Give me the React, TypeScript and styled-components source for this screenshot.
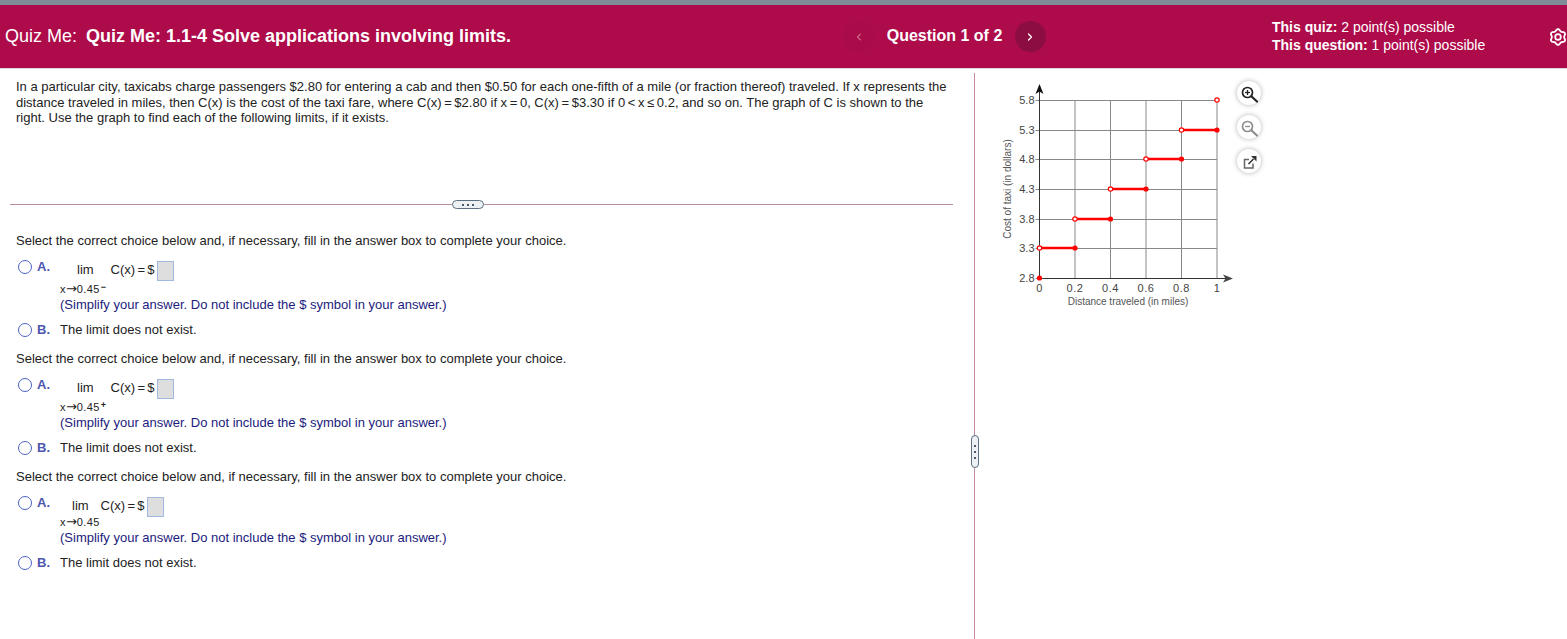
import React from "react";
import styled, {createGlobalStyle} from "styled-components";
import {ChevronLeft, ChevronRight} from "lucide-react";

const GlobalStyle = createGlobalStyle`
  html, body {
    margin: 0;
    padding: 0;
    background: #fff;
    overflow: hidden;
  }
  body {
    font-family: "Liberation Sans", Arial, sans-serif;
    color: #222;
  }
`

const Page = styled.div`
  width: 1567px;
  height: 639px;
  display: flex;
  flex-direction: column;
`

const Header = styled.header`
  height: 63px;
  flex: none;
  display: grid;
  grid-template-columns: 843px 203px 226px 1fr;
  align-items: center;
  background: #ae0b4a;
  border-top: 5px solid #7f8c98;
  border-bottom: 1px solid #d9d9de;
  color: #fff;
`

const Title = styled.div`
  padding-left: 5px;
  font-size: 18px;
  white-space: nowrap;

  b {
    margin-left: 4px;
  }
`

const Pager = styled.div`
  display: flex;
  align-items: center;
  justify-content: space-between;
  font-size: 16px;
  font-weight: bold;
`

const PagerLabel = styled.span`
  margin-top: -2px;
`

const PageButton = styled.div<{$active?: boolean}>`
  width: 31px;
  height: 31px;
  border-radius: 50%;
  display: flex;
  align-items: center;
  justify-content: center;
  background: ${p => p.$active ? "#8c0e40" : "#a90c49"};
  color: ${p => p.$active ? "#fff" : "#e3a9bf"};
`

const Points = styled.div`
  grid-column: 4;
  display: flex;
  justify-content: space-between;
  align-items: center;
  font-size: 14px;
  line-height: 18px;
`

const PointsText = styled.div`
  margin-top: -2px;
`

const Body = styled.main`
  flex: 1;
  display: flex;
  min-height: 0;
`

const LeftPane = styled.section`
  width: 970px;
  flex: none;
  padding-top: 10px;
  box-sizing: border-box;
`

const Prompt = styled.p`
  margin: 0 0 0 16px;
  width: 935px;
  height: 121px;
  font-size: 13px;
  line-height: 15.5px;
`

const Rule = styled.div`
  margin-left: 10px;
  width: 943px;
  display: grid;
  grid-template-columns: 442px 32px 1fr;
  align-items: center;
  height: 9px;
`

const RuleLine = styled.div`
  height: 1px;
  background: #b98c9d;
`

const RulePill = styled.div`
  height: 9px;
  box-sizing: border-box;
  border: 1px solid #5d6f80;
  border-radius: 5px;
  background: #eef1f4;
  display: flex;
  align-items: center;
  justify-content: center;
  gap: 3px;
`

const Dot = styled.i`
  width: 2px;
  height: 2px;
  background: #4a5a6a;
  display: block;
`

const Part = styled.div<{$top: number}>`
  margin: ${p => p.$top}px 0 0 16px;
  font-size: 13px;
`

const Instruction = styled.div`
  height: 16px;
  line-height: 16px;
`

const ChoiceRow = styled.div<{$top: number}>`
  display: grid;
  grid-template-columns: 14px 24px 1fr;
  column-gap: 2px;
  margin: ${p => p.$top}px 0 0 2px;
`

const Radio = styled.span`
  width: 14px;
  height: 14px;
  margin-top: 1px;
  box-sizing: border-box;
  border: 1.5px solid #4a62c4;
  border-radius: 50%;
  background: #fff;
`

const Letter = styled.span`
  font-weight: bold;
  color: #4c57ad;
  line-height: 16px;
  padding-left: 3px;
`

const ChoiceText = styled.div`
  line-height: 16px;
`

const LimitLine = styled.div<{$pad: number; $gap: number}>`
  display: flex;
  align-items: center;
  height: 20px;
  margin-top: 1px;
  padding-left: ${p => p.$pad}px;

  > span:first-child {
    margin-right: ${p => p.$gap}px;
  }
`

const Equation = styled.span`
  word-spacing: -1.3px;
`

const AnswerBox = styled.span`
  width: 17px;
  height: 20px;
  margin: 2px 0 0 2px;
  box-sizing: border-box;
  border: 1px solid #a3b8e0;
  background: #dedede;
`

const Approach = styled.div<{$top: number}>`
  margin-top: ${p => p.$top}px;
  height: 14px;
  line-height: 14px;
  font-size: 11px;
  letter-spacing: 0.4px;

  sup {
    font-size: 9px;
    font-weight: bold;
    line-height: 0;
    vertical-align: 3px;
    margin-left: 1px;
  }
`

const Arrow = styled.span`
  font-family: "DejaVu Sans", sans-serif;
  font-size: 13px;
  line-height: 0;
  letter-spacing: 0;
`

const Hint = styled.div`
  margin-top: 1px;
  height: 16px;
  line-height: 16px;
  color: #1b1b7d;
`

const Grip = styled.div`
  width: 9px;
  flex: none;
  margin-top: 4px;
  display: grid;
  grid-template-rows: 362px 33px 1fr;
  justify-items: center;
`

const GripLine = styled.div`
  width: 1px;
  background: #c48aa0;
`

const GripPill = styled.div`
  width: 8px;
  box-sizing: border-box;
  border: 1px solid #5d6f80;
  border-radius: 4px;
  background: #eef1f4;
  display: flex;
  flex-direction: column;
  align-items: center;
  justify-content: center;
  gap: 4px;
`

const RightPane = styled.aside`
  flex: 1;
  display: flex;
  align-items: flex-start;
  padding: 11px 0 0 21px;
`

const Tools = styled.div`
  display: flex;
  flex-direction: column;
  gap: 10px;
  margin: 1px 0 0 1px;
`

const ToolButton = styled.div`
  width: 24px;
  height: 24px;
  border-radius: 50%;
  background: #fff;
  box-shadow: 0 0 5px rgba(0, 0, 0, 0.3);
  display: flex;
`

// six soft lobes, the stock gear icon comes out too spiky at this size
function gearPath() {
  const pts: string[] = []
  for (let i = 0; i < 72; i++) {
    const a = (i / 72) * Math.PI * 2
    const r = 7 + 0.9 * Math.cos(6 * a)
    pts.push(`${(9 + r * Math.sin(a)).toFixed(2)} ${(9 - r * Math.cos(a)).toFixed(2)}`)
  }
  return `M${pts.join("L")}Z`
}

function GearIcon() {
  return (
    <svg width="18" height="18" viewBox="0 0 18 18" fill="none" stroke="#fff" strokeWidth="1.8">
      <path d={gearPath()} strokeLinejoin="round" />
      <circle cx="9" cy="9" r="2.8" />
    </svg>
  )
}

function MagnifierIcon({color, plus}: {color: string; plus?: boolean}) {
  return (
    <svg width="24" height="24" viewBox="0 0 24 24" fill="none" stroke={color}>
      <circle cx="10.5" cy="11.5" r="5" strokeWidth="1.7" />
      <path d="M14.3 15.3 L20 20.5" strokeWidth="2.2" strokeLinecap="round" />
      <path d="M8 11.5 H13" strokeWidth="1.3" />
      {plus && <path d="M10.5 9 V14" strokeWidth="1.3" />}
    </svg>
  )
}

function PopoutIcon() {
  return (
    <svg width="24" height="24" viewBox="0 0 24 24" fill="none">
      <path d="M12 10.5 H7.5 V19 H16 V14.5" stroke="#666" strokeWidth="1.5" />
      <path d="M11.5 15 L16.5 10" stroke="#333" strokeWidth="1.6" />
      <path d="M14 7 H19.5 V12.5 Z" fill="#333" />
    </svg>
  )
}

const x0 = 39.5, xStep = 35.5
const yTicks = [
  {label: "5.8", y: 20},
  {label: "5.3", y: 50},
  {label: "4.8", y: 79},
  {label: "4.3", y: 109},
  {label: "3.8", y: 139},
  {label: "3.3", y: 168},
  {label: "2.8", y: 198},
]
const xLabels = ["0", "0.2", "0.4", "0.6", "0.8", "1"]
const steps = [5, 4, 3, 2, 1]

function FareChart() {
  const xAt = (i: number) => x0 + i * xStep
  return (
    <svg width="236" height="232" viewBox="0 0 236 232" fontFamily="Liberation Sans, Arial, sans-serif">
      {yTicks.map(t => (
        <g key={t.label}>
          <line x1={x0 - 4} x2={xAt(5)} y1={t.y + .5} y2={t.y + .5} stroke="#888" />
          <text x={x0 - 5} y={t.y + 4} fontSize="11" fill="#444" textAnchor="end">{t.label}</text>
        </g>
      ))}
      {xLabels.map((l, i) => (
        <g key={l}>
          <line x1={xAt(i)} x2={xAt(i)} y1={20} y2={198} stroke="#888" />
          <text x={xAt(i)} y={212} fontSize="11" fill="#444" textAnchor="middle" letterSpacing=".5">{l}</text>
        </g>
      ))}
      <line x1={x0} x2={x0} y1={7} y2={198} stroke="#333" />
      <line x1={x0} x2={x0 + 190} y1={198.5} y2={198.5} stroke="#333" />
      <path d="M39.5 4 L43.5 14 L39.5 11.5 L35.5 14 Z" fill="#111" />
      <path d="M233 198.5 L223 194.5 L225.5 198.5 L223 202.5 Z" fill="#444" />

      {steps.map(i => {
        const y = yTicks[i].y
        return (
          <g key={i}>
            <line x1={xAt(5 - i)} x2={xAt(6 - i)} y1={y} y2={y} stroke="#f00" strokeWidth="2.4" />
            <circle cx={xAt(5 - i)} cy={y} r="2.2" fill="#fff" stroke="#f00" strokeWidth="1.2" />
            <circle cx={xAt(6 - i)} cy={y} r="2.6" fill="#f00" />
          </g>
        )
      })}
      <circle cx={xAt(5)} cy={20} r="2.2" fill="#fff" stroke="#f00" strokeWidth="1.2" />
      <circle cx={x0} cy={198} r="2.6" fill="#f00" />

      <text x={128} y={225} fontSize="10" fill="#555" textAnchor="middle">Distance traveled (in miles)</text>
      <text transform="translate(11 109) rotate(-90)" fontSize="10" fill="#555" textAnchor="middle">Cost of taxi (in dollars)</text>
    </svg>
  )
}

type PartProps = {
  top: number
  limitPad: number
  limitGap: number
  approachTop: number
  sign?: string
}

function QuestionPart({top, limitPad, limitGap, approachTop, sign}: PartProps) {
  return (
    <Part $top={top}>
      <Instruction>Select the correct choice below and, if necessary, fill in the answer box to complete your choice.</Instruction>
      <ChoiceRow $top={10}>
        <Radio />
        <Letter>A.</Letter>
        <ChoiceText>
          <LimitLine $pad={limitPad} $gap={limitGap}>
            <span>lim</span>
            <Equation>C(x) = $</Equation>
            <AnswerBox />
          </LimitLine>
          <Approach $top={approachTop}>x<Arrow>→</Arrow>0.45{sign && <sup>{sign}</sup>}</Approach>
          <Hint>(Simplify your answer. Do not include the $ symbol in your answer.)</Hint>
        </ChoiceText>
      </ChoiceRow>
      <ChoiceRow $top={9}>
        <Radio />
        <Letter>B.</Letter>
        <ChoiceText>The limit does not exist.</ChoiceText>
      </ChoiceRow>
    </Part>
  )
}

const promptText = "In a particular city, taxicabs charge passengers $2.80 for entering a cab and then $0.50 for each one-fifth of a mile (or fraction thereof) traveled. If x represents the distance traveled in miles, then C(x) is the cost of the taxi fare, where C(x)\u2009=\u2009$2.80 if x\u2009=\u20090, C(x)\u2009=\u2009$3.30 if 0\u2009<\u2009x\u2009≤\u20090.2, and so on. The graph of C is shown to the right. Use the graph to find each of the following limits, if it exists."

export default function App() {
  return (
    <Page>
      <GlobalStyle />
      <Header>
        <Title>Quiz Me: <b>Quiz Me: 1.1-4 Solve applications involving limits.</b></Title>
        <Pager>
          <PageButton><ChevronLeft size={12} strokeWidth={2} /></PageButton>
          <PagerLabel>Question 1 of 2</PagerLabel>
          <PageButton $active><ChevronRight size={12} strokeWidth={2.5} /></PageButton>
        </Pager>
        <Points>
          <PointsText>
            <div><b>This quiz:</b> 2 point(s) possible</div>
            <div><b>This question:</b> 1 point(s) possible</div>
          </PointsText>
          <GearIcon />
        </Points>
      </Header>
      <Body>
        <LeftPane>
          <Prompt>{promptText}</Prompt>
          <Rule>
            <RuleLine />
            <RulePill><Dot /><Dot /><Dot /></RulePill>
            <RuleLine />
          </Rule>
          <QuestionPart top={24} limitPad={17} limitGap={17} approachTop={2} sign="−" />
          <QuestionPart top={13} limitPad={17} limitGap={17} approachTop={2} sign="+" />
          <QuestionPart top={13} limitPad={12} limitGap={12} approachTop={-1} />
        </LeftPane>
        <Grip>
          <GripLine />
          <GripPill><Dot /><Dot /><Dot /></GripPill>
          <GripLine />
        </Grip>
        <RightPane>
          <FareChart />
          <Tools>
            <ToolButton><MagnifierIcon color="#222" plus /></ToolButton>
            <ToolButton><MagnifierIcon color="#8d8d8d" /></ToolButton>
            <ToolButton><PopoutIcon /></ToolButton>
          </Tools>
        </RightPane>
      </Body>
    </Page>
  )
}
